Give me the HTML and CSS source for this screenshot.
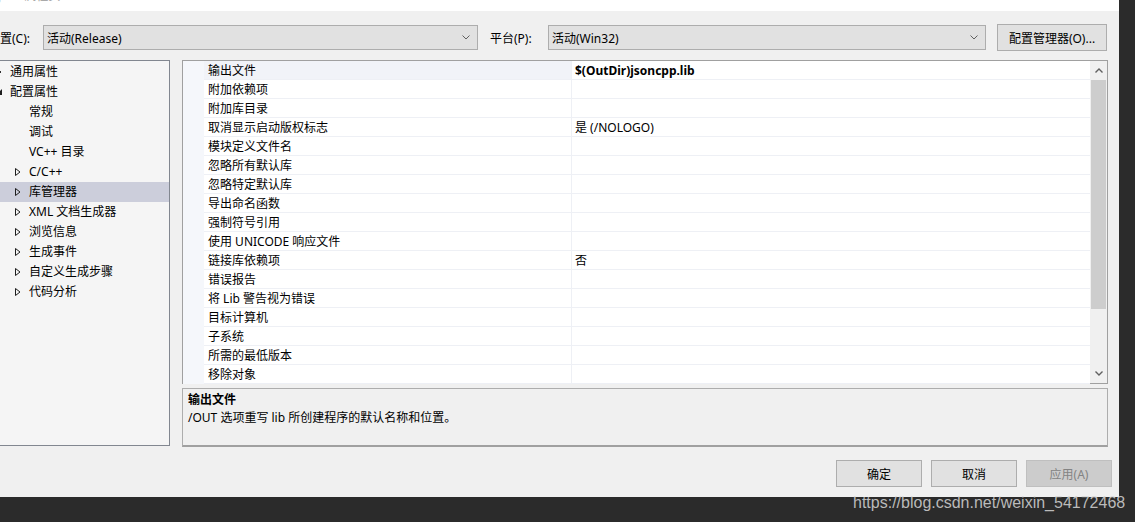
FILE: index.html
```html
<!DOCTYPE html>
<html lang="zh-CN">
<head>
    <meta charset="UTF-8">
    <title>属性页</title>
    <link rel="stylesheet" href="styles.css">
</head>
<body>
    <div class="dialog">
        <div class="titlebar"><span class="titlebar-text">lib_json 属性页</span></div>

        <div class="config-row">
            <span class="field-label config-label">配置(C):</span>
            <div class="combo combo-config">
                <span>活动(Release)</span>
                <svg class="chevron" viewBox="0 0 8 5"><polyline points="0.5,0.5 4,4 7.5,0.5" fill="none" stroke="#606060"/></svg>
            </div>
            <span class="field-label platform-label">平台(P):</span>
            <div class="combo combo-platform">
                <span>活动(Win32)</span>
                <svg class="chevron" viewBox="0 0 8 5"><polyline points="0.5,0.5 4,4 7.5,0.5" fill="none" stroke="#606060"/></svg>
            </div>
            <div class="btn btn-manager">配置管理器(O)...</div>
        </div>

        <div class="main">
            <div class="tree">
                <div class="tree-row level0">
                    <svg class="expander" viewBox="0 0 6 8"><path d="M0.5 0.5 L5 4 L0.5 7.5 Z" fill="none" stroke="#1e1e1e"/></svg>
                    <span>通用属性</span>
                </div>
                <div class="tree-row level0">
                    <svg class="expander" viewBox="0 0 6 8"><path d="M6 1 L6 7 L0 7 Z" fill="#1e1e1e"/></svg>
                    <span>配置属性</span>
                </div>
                <div class="tree-row level1"><span class="expander"></span><span>常规</span></div>
                <div class="tree-row level1"><span class="expander"></span><span>调试</span></div>
                <div class="tree-row level1"><span class="expander"></span><span>VC++ 目录</span></div>
                <div class="tree-row level1">
                    <svg class="expander" viewBox="0 0 6 8"><path d="M0.5 0.5 L5 4 L0.5 7.5 Z" fill="none" stroke="#1e1e1e"/></svg>
                    <span>C/C++</span>
                </div>
                <div class="tree-row level1 selected">
                    <svg class="expander" viewBox="0 0 6 8"><path d="M0.5 0.5 L5 4 L0.5 7.5 Z" fill="none" stroke="#1e1e1e"/></svg>
                    <span>库管理器</span>
                </div>
                <div class="tree-row level1">
                    <svg class="expander" viewBox="0 0 6 8"><path d="M0.5 0.5 L5 4 L0.5 7.5 Z" fill="none" stroke="#1e1e1e"/></svg>
                    <span>XML 文档生成器</span>
                </div>
                <div class="tree-row level1">
                    <svg class="expander" viewBox="0 0 6 8"><path d="M0.5 0.5 L5 4 L0.5 7.5 Z" fill="none" stroke="#1e1e1e"/></svg>
                    <span>浏览信息</span>
                </div>
                <div class="tree-row level1">
                    <svg class="expander" viewBox="0 0 6 8"><path d="M0.5 0.5 L5 4 L0.5 7.5 Z" fill="none" stroke="#1e1e1e"/></svg>
                    <span>生成事件</span>
                </div>
                <div class="tree-row level1">
                    <svg class="expander" viewBox="0 0 6 8"><path d="M0.5 0.5 L5 4 L0.5 7.5 Z" fill="none" stroke="#1e1e1e"/></svg>
                    <span>自定义生成步骤</span>
                </div>
                <div class="tree-row level1">
                    <svg class="expander" viewBox="0 0 6 8"><path d="M0.5 0.5 L5 4 L0.5 7.5 Z" fill="none" stroke="#1e1e1e"/></svg>
                    <span>代码分析</span>
                </div>
            </div>

            <div class="side">
                <div class="grid">
                    <div class="grid-rows">
                        <div class="grid-row current"><span class="gutter"></span><span class="prop-name">输出文件</span><span class="prop-value bold">$(OutDir)jsoncpp.lib</span></div>
                        <div class="grid-row"><span class="gutter"></span><span class="prop-name">附加依赖项</span><span class="prop-value"></span></div>
                        <div class="grid-row"><span class="gutter"></span><span class="prop-name">附加库目录</span><span class="prop-value"></span></div>
                        <div class="grid-row"><span class="gutter"></span><span class="prop-name">取消显示启动版权标志</span><span class="prop-value">是 (/NOLOGO)</span></div>
                        <div class="grid-row"><span class="gutter"></span><span class="prop-name">模块定义文件名</span><span class="prop-value"></span></div>
                        <div class="grid-row"><span class="gutter"></span><span class="prop-name">忽略所有默认库</span><span class="prop-value"></span></div>
                        <div class="grid-row"><span class="gutter"></span><span class="prop-name">忽略特定默认库</span><span class="prop-value"></span></div>
                        <div class="grid-row"><span class="gutter"></span><span class="prop-name">导出命名函数</span><span class="prop-value"></span></div>
                        <div class="grid-row"><span class="gutter"></span><span class="prop-name">强制符号引用</span><span class="prop-value"></span></div>
                        <div class="grid-row"><span class="gutter"></span><span class="prop-name">使用 UNICODE 响应文件</span><span class="prop-value"></span></div>
                        <div class="grid-row"><span class="gutter"></span><span class="prop-name">链接库依赖项</span><span class="prop-value">否</span></div>
                        <div class="grid-row"><span class="gutter"></span><span class="prop-name">错误报告</span><span class="prop-value"></span></div>
                        <div class="grid-row"><span class="gutter"></span><span class="prop-name">将 Lib 警告视为错误</span><span class="prop-value"></span></div>
                        <div class="grid-row"><span class="gutter"></span><span class="prop-name">目标计算机</span><span class="prop-value"></span></div>
                        <div class="grid-row"><span class="gutter"></span><span class="prop-name">子系统</span><span class="prop-value"></span></div>
                        <div class="grid-row"><span class="gutter"></span><span class="prop-name">所需的最低版本</span><span class="prop-value"></span></div>
                        <div class="grid-row"><span class="gutter"></span><span class="prop-name">移除对象</span><span class="prop-value"></span></div>
                    </div>
                    <div class="scrollbar">
                        <div class="scroll-btn">
                            <svg class="scroll-arrow" viewBox="0 0 8 5"><polyline points="0.5,4.5 4,1 7.5,4.5" fill="none" stroke="#606060" stroke-width="1.4"/></svg>
                        </div>
                        <div class="scroll-thumb"></div>
                        <div class="scroll-track"></div>
                        <div class="scroll-btn">
                            <svg class="scroll-arrow" viewBox="0 0 8 5"><polyline points="0.5,0.5 4,4 7.5,0.5" fill="none" stroke="#606060" stroke-width="1.4"/></svg>
                        </div>
                    </div>
                </div>
                <div class="desc">
                    <div class="desc-title">输出文件</div>
                    <div>/OUT 选项重写 lib 所创建程序的默认名称和位置。</div>
                </div>
            </div>
        </div>

        <div class="buttons">
            <div class="btn btn-dialog">确定</div>
            <div class="btn btn-dialog">取消</div>
            <div class="btn btn-dialog disabled">应用(A)</div>
        </div>
    </div>

    <div class="watermark">https://blog.csdn.net/weixin_54172468</div>
</body>
</html>
```

FILE: styles.css
```css
* {
    box-sizing: border-box;
}
html, body {
    margin: 0;
    height: 100%;
}
body {
    position: relative;
    overflow: hidden;
    background: #2b2b2b;
    font-family: "Noto Sans", "Noto Sans CJK SC", sans-serif;
    font-size: 12px;
    color: #000;
}
.dialog {
    width: 1119px;
    height: 497px;
    background: #f0f0f0;
    overflow: hidden;
}
.titlebar {
    height: 11px;
    background: #fff;
    overflow: hidden;
    color: #9a9a9a;
}
.titlebar-text {
    display: block;
    margin: -12px 0 0 -21px;
    line-height: 16px;
    white-space: nowrap;
}

/* top row: configuration / platform */
.config-row {
    display: flex;
    align-items: center;
    height: 27px;
    margin-top: 13px;
    margin-left: -12px;
    white-space: nowrap;
}
.field-label {
    flex: none;
}
.config-label {
    width: 55px;
}
.platform-label {
    width: 58px;
    margin-left: 12px;
}
.combo {
    flex: none;
    height: 25px;
    display: flex;
    align-items: center;
    justify-content: space-between;
    padding: 0 7px 0 3px;
    background: #e1e1e1;
    border: 1px solid #adadad;
}
.combo-config {
    width: 435px;
}
.combo-platform {
    width: 438px;
}
.chevron {
    width: 8px;
    height: 5px;
}
.btn {
    flex: none;
    height: 27px;
    display: flex;
    align-items: center;
    justify-content: center;
    background: #e1e1e1;
    border: 1px solid #adadad;
}
.btn-manager {
    width: 110px;
    margin-left: 11px;
}

/* tree + grid */
.main {
    display: flex;
    height: 387px;
    margin-top: 9px;
}
.tree {
    flex: none;
    width: 180px;
    height: 386px;
    margin-left: -10px;
    padding-top: 1px;
    border: 1px solid #828790;
    background: #f5f5f5;
}
.tree-row {
    display: flex;
    align-items: center;
    height: 20px;
    line-height: 20px;
    white-space: nowrap;
}
.tree-row.level0 {
    padding-left: 5px;
}
.tree-row.level1 {
    padding-left: 24px;
}
.tree-row.selected {
    background: #cccedb;
}
.expander {
    flex: none;
    width: 6px;
    height: 8px;
    margin-right: 8px;
}

.side {
    flex: none;
    width: 926px;
    margin-left: 12px;
    display: flex;
    flex-direction: column;
    gap: 4px;
}
.grid {
    display: flex;
    height: 324px;
    border: 1px solid #a0a0a0;
    background: #fff;
}
.grid-rows {
    flex: 1;
}
.grid-row {
    display: flex;
    height: 19px;
    white-space: nowrap;
}
.gutter {
    flex: none;
    width: 21px;
    background: #f5f7fb;
}
.prop-name {
    flex: none;
    width: 368px;
    padding: 2px 0 0 4px;
    line-height: 16px;
    border-right: 1px solid #eef0f5;
    border-bottom: 1px solid #eef0f5;
}
.prop-value {
    flex: 1;
    padding: 2px 0 0 3px;
    line-height: 16px;
    border-bottom: 1px solid #eef0f5;
}
.prop-value.bold {
    font-weight: 700;
}
.grid-row.current .prop-name {
    background: #f1f3f8;
}
.scrollbar {
    flex: none;
    width: 17px;
    display: flex;
    flex-direction: column;
    background: #f0f0f0;
}
.scroll-btn {
    height: 19px;
    display: flex;
    align-items: center;
    justify-content: center;
}
.scroll-arrow {
    width: 8px;
    height: 5px;
}
.scroll-thumb {
    height: 229px;
    margin: 0 1px;
    background: #cdcdcd;
}
.scroll-track {
    flex: 1;
}

.desc {
    height: 59px;
    padding: 2px 5px;
    line-height: 18px;
    border: 1px solid #adadad;
    border-bottom: 2px solid #a0a0a0;
    background: #f0f0f0;
}
.desc-title {
    font-weight: 700;
}

/* bottom buttons */
.buttons {
    display: flex;
    justify-content: flex-end;
    gap: 9px;
    margin-top: 13px;
    padding-right: 7px;
}
.btn-dialog {
    width: 86px;
}
.btn.disabled {
    background: #cccccc;
    border-color: #bfbfbf;
    color: #838383;
}

.watermark {
    position: absolute;
    left: 853px;
    top: 494px;
    font-family: "Liberation Sans", Arial, sans-serif;
    font-size: 16px;
    line-height: 18px;
    color: rgba(214, 214, 214, 0.85);
    white-space: nowrap;
}
```
